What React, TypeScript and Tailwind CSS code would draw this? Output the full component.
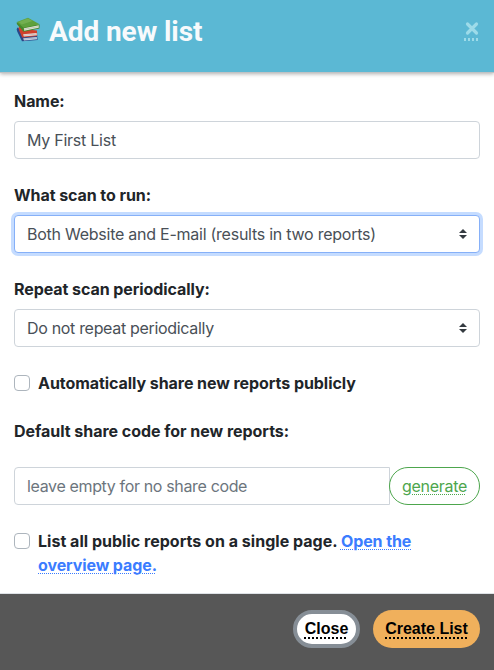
import type { ReactNode } from 'react';

function Books() {
  return (
    <svg className="mt-[17px] h-[25px] w-[25px] shrink-0" viewBox="0 0 25 25">
      <path d="M2.4 10.5 Q1 12 2.2 14.5 L7 24.3 L22.6 22.9 L22.2 18.5 L8 17 L5 12Z" fill="#2a4688" />
      <path d="M8.2 21.2 L21.8 20 L22.1 22.2 L9 23.5Z" fill="#cfd6e2" />
      <path d="M8.4 22.2 L22 21" stroke="#8492b0" strokeWidth=".5" />
      <path d="M4 9.2 Q3 11 4.2 13.6 L7.2 20.4 L22.2 19 L22 13.5 L8 12Z" fill="#d0402c" />
      <path d="M8.2 17.3 L21.6 16 L21.9 18.2 L8.8 19.5Z" fill="#eadedb" />
      <path d="M8.4 18.4 L21.8 17.1" stroke="#b09a98" strokeWidth=".5" />
      <path d="M1.8 5.2 Q1.2 6.8 3 8.6 L8.6 14.8 L24.4 11.6 L24.6 7.4 L9 8Z" fill="#45872c" />
      <path d="M8.8 11.2 L23.8 8.2 L23.7 10.8 L9.2 13.7Z" fill="#e2e6d6" />
      <path d="M9 12.4 L23.8 9.5" stroke="#a2ad92" strokeWidth=".5" />
      <path d="M1.8 5 L13 .8 L24.6 7.2 L8.5 10.8Z" fill="#5fa13d" />
      <path d="M3.5 5 L12.9 1.6 L17.5 4.1 L6.8 7.6Z" fill="#83bb60" opacity=".55" />
    </svg>
  );
}

function Label({ children }: { children: ReactNode }) {
  return <div className="mb-2 h-6 font-bold tracking-[-0.07px] whitespace-nowrap">{children}</div>;
}

function Select({ children, focused, tracking }: { children: ReactNode; focused?: boolean; tracking: string }) {
  return (
    <div
      className={`mb-6 flex h-[38px] items-center justify-between rounded-[4px] border bg-white pr-3 pl-3 text-[#495057] ${
        focused ? 'border-[#86b0f8] shadow-[0_0_0_3px_#c5dcff]' : 'border-[#ced4da]'
      }`}
    >
      <span className={tracking}>{children}</span>
      <svg className="h-[10px] w-2" viewBox="0 0 4 5">
        <path fill="#343a40" d="M2 0L0 2h4zm0 5L0 3h4z" />
      </svg>
    </div>
  );
}

function Checkbox() {
  return <span className="mt-1 mr-2 h-4 w-4 shrink-0 rounded-[4px] border border-[#adb5bd] bg-white" />;
}

export default function App() {
  return (
    <div className="flex h-[670px] w-[494px] flex-col overflow-hidden bg-white font-['Inter','Liberation_Sans',sans-serif] text-base leading-6 text-[#212529]">
      <header className="relative flex h-[72px] shrink-0 bg-[#5bb8d4] pr-[15px] pl-[15px] shadow-[0_1px_0_#bfc2c4,0_2px_4px_#77777799]">
        <Books />
        <h1 className="mt-[11px] ml-[9px] font-['Roboto',sans-serif] text-[28px] leading-[42px] font-bold tracking-[-0.08px] whitespace-nowrap text-[#f7fafc]">
          Add new list
        </h1>
        <svg className="mt-[21px] ml-auto h-[20px] w-[16px]" viewBox="0 0 16 20">
          <path d="M4.5 3 L13.5 12 M13.5 3 L4.5 12" stroke="#9ddbe9" strokeWidth="3.2" strokeLinecap="round" />
          <path d="M1 18.5 H15" stroke="#9ddbe9" strokeWidth="3" strokeDasharray="2 2" />
        </svg>
      </header>

      <main className="h-[521px] shrink-0 px-[14px] pt-[17px]">
        <Label>Name:</Label>
        <div className="mb-6 flex h-[38px] items-center rounded-[4px] border border-[#ced4da] px-3 text-[#495057]">
          <span className="tracking-[-0.25px]">My First List</span>
        </div>
        <Label>What scan to run:</Label>
        <Select focused tracking="tracking-[-0.25px]">Both Website and E-mail (results in two reports)</Select>
        <Label>Repeat scan periodically:</Label>
        <Select tracking="tracking-[-0.32px]">Do not repeat periodically</Select>
        <div className="mb-6 flex h-6 font-bold">
          <Checkbox />
          <span className="tracking-[-0.06px]">Automatically share new reports publicly</span>
        </div>
        <div className="mb-6 h-6 font-bold">
          <span className="tracking-[-0.03px]">Default share code for new reports:</span>
        </div>
        <div className="mb-6 flex h-[38px]">
          <div className="flex w-[376px] items-center rounded-l-[4px] border border-[#ced4da] px-3 text-[#6c757d]">
            <span className="tracking-[-0.35px]">leave empty for no share code</span>
          </div>
          <button className="-ml-px flex w-[91px] items-center justify-center rounded-full border border-[#4da64d] bg-white text-[#4da64d]">
            <span className="tracking-[-0.3px] underline decoration-dotted decoration-1 underline-offset-2">generate</span>
          </button>
        </div>
        <div className="flex font-bold">
          <Checkbox />
          <div className="whitespace-nowrap">
            <span className="tracking-[0.02px]">List all public reports on a single page. </span>
            <a className="tracking-[-0.1px] text-[#3b7cff] underline decoration-dotted decoration-1 underline-offset-2">
              Open the
              <br />
              overview page.
            </a>
          </div>
        </div>
      </main>

      <footer className="flex h-[77px] shrink-0 justify-end gap-[13px] border-t border-[#dee2e6] bg-[#575757] px-[14px] pt-4 font-['Liberation_Sans',Arial,sans-serif] font-bold text-black">
        <button className="flex h-[38px] w-[67px] items-center justify-center rounded-full border-4 border-[#868e96] bg-white">
          <span className="underline decoration-dotted decoration-2 underline-offset-[3px]">Close</span>
        </button>
        <button className="flex h-[38px] w-[107px] items-center justify-center rounded-full bg-[#f0b05c]">
          <span className="underline decoration-dotted decoration-2 underline-offset-[3px]">Create List</span>
        </button>
      </footer>
    </div>
  );
}
